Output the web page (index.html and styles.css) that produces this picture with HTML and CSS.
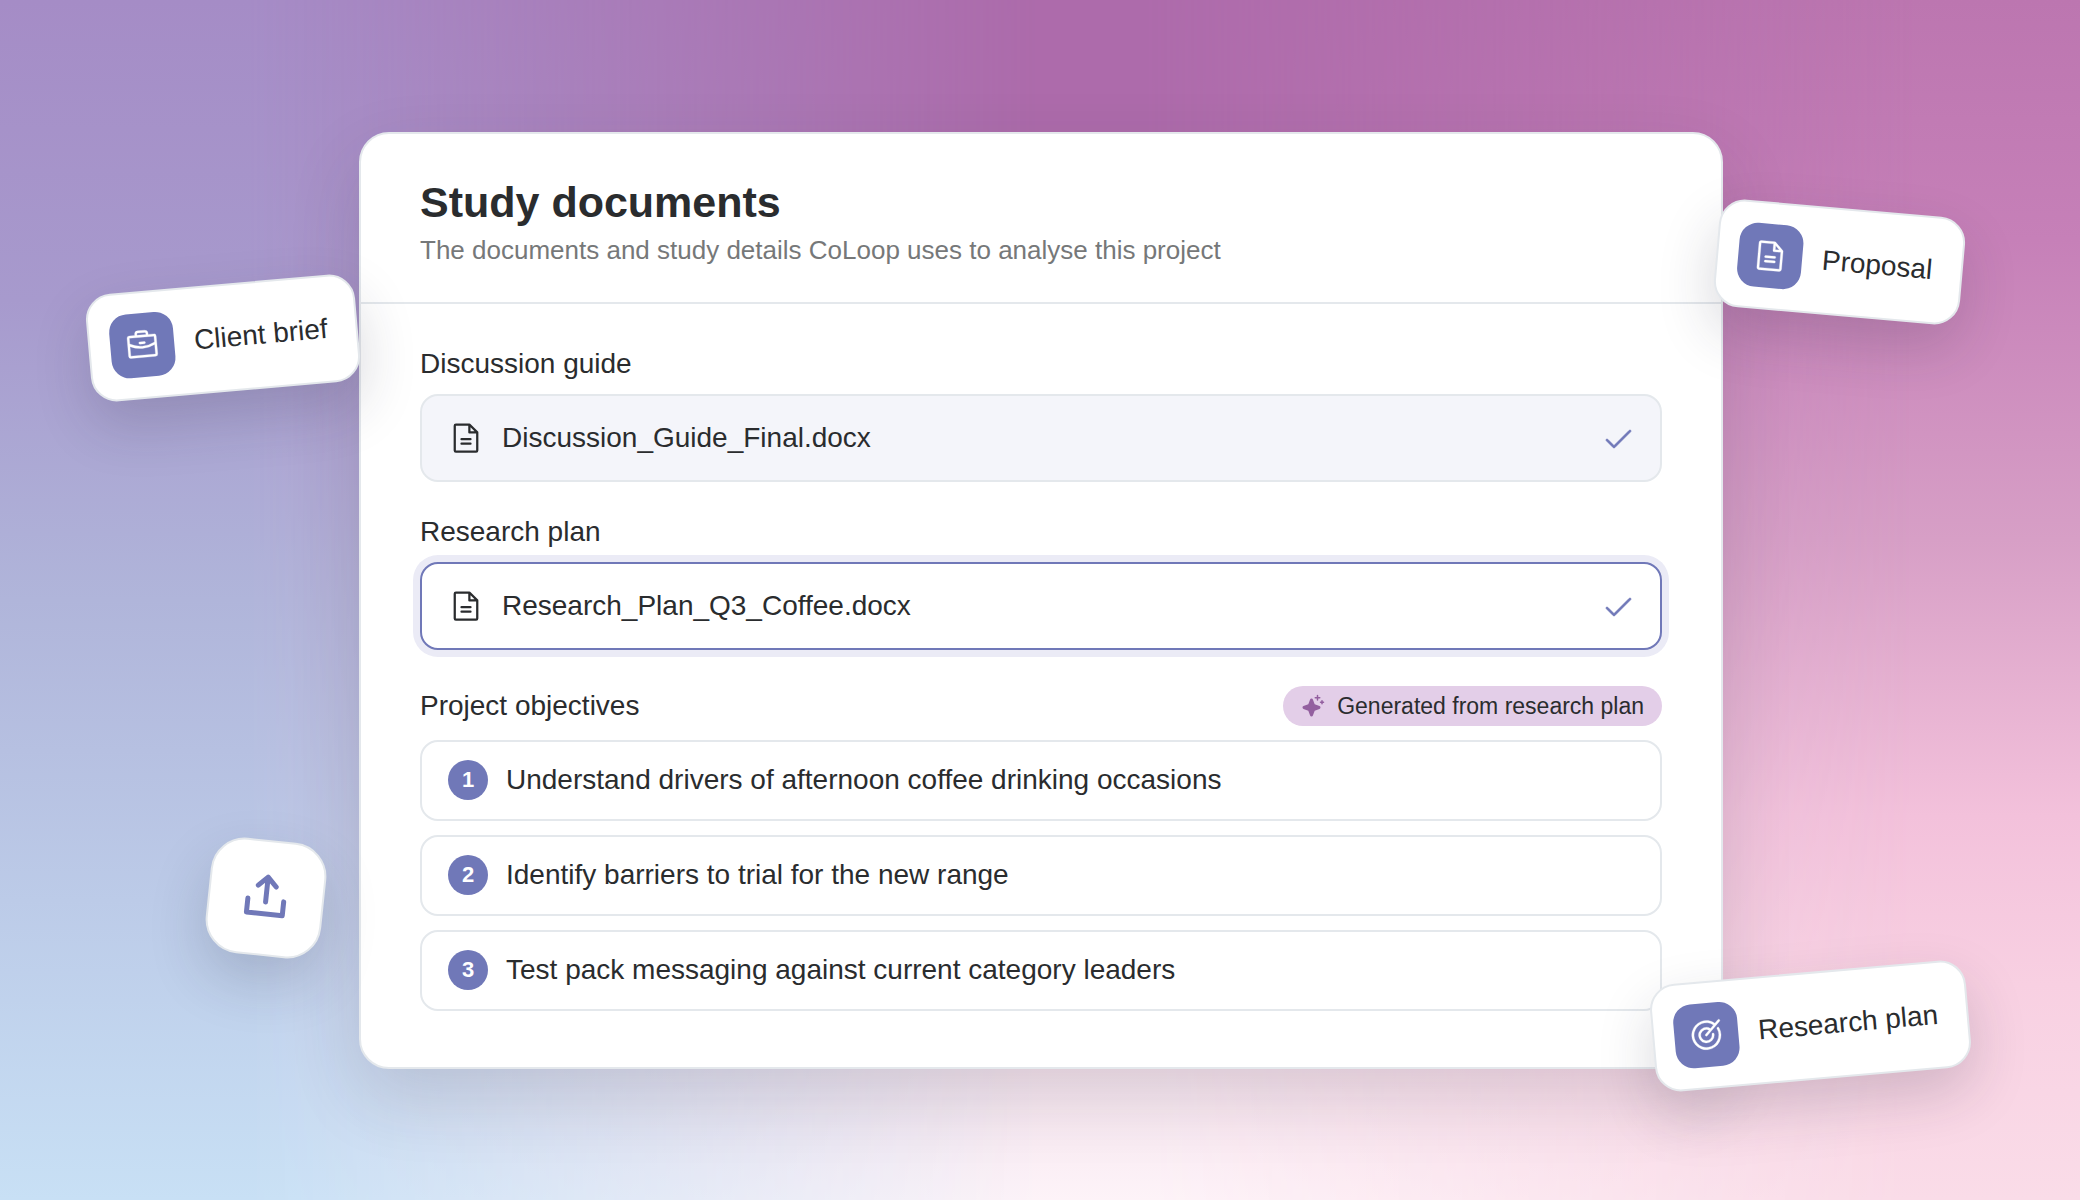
FILE: index.html
```html
<!DOCTYPE html>
<html lang="en">
<head>
    <meta charset="UTF-8">
    <meta name="viewport" content="width=device-width, initial-scale=1.0">
    <title>Study documents</title>
    <link rel="stylesheet" href="styles.css">
</head>
<body>
    <svg class="icon-defs" aria-hidden="true">
        <symbol id="file" viewBox="0 0 256 256">
            <path d="M213.66,82.34l-56-56A8,8,0,0,0,152,24H56A16,16,0,0,0,40,40V216a16,16,0,0,0,16,16H200a16,16,0,0,0,16-16V88A8,8,0,0,0,213.66,82.34ZM160,51.31,188.69,80H160ZM200,216H56V40h88V88a8,8,0,0,0,8,8h48V216Zm-32-80a8,8,0,0,1-8,8H96a8,8,0,0,1,0-16h64A8,8,0,0,1,168,136Zm0,32a8,8,0,0,1-8,8H96a8,8,0,0,1,0-16h64A8,8,0,0,1,168,168Z"/>
        </symbol>
        <symbol id="check" viewBox="0 0 256 256">
            <path d="M229.66,77.66l-128,128a8,8,0,0,1-11.32,0l-56-56a8,8,0,0,1,11.32-11.32L96,188.69,218.34,66.34a8,8,0,0,1,11.32,11.32Z"/>
        </symbol>
    </svg>

    <main class="stage">
        <section class="card">
            <header class="card-header">
                <h1>Study documents</h1>
                <p>The documents and study details CoLoop uses to analyse this project</p>
            </header>
            <div class="card-body">
                <div class="field">
                    <h2>Discussion guide</h2>
                    <div class="file">
                        <svg class="file-icon"><use href="#file"/></svg>
                        <span>Discussion_Guide_Final.docx</span>
                        <svg class="check-icon"><use href="#check"/></svg>
                    </div>
                </div>
                <div class="field">
                    <h2>Research plan</h2>
                    <div class="file active">
                        <svg class="file-icon"><use href="#file"/></svg>
                        <span>Research_Plan_Q3_Coffee.docx</span>
                        <svg class="check-icon"><use href="#check"/></svg>
                    </div>
                </div>
                <div class="objectives">
                    <div class="objectives-head">
                        <h2>Project objectives</h2>
                        <span class="pill">
                            <svg class="pill-icon" viewBox="0 0 256 256">
                                <path d="M208,144a15.78,15.78,0,0,1-10.42,14.94L146,178l-19,51.62a15.92,15.92,0,0,1-29.88,0L78,178l-51.62-19a15.92,15.92,0,0,1,0-29.88L78,110l19-51.62a15.92,15.92,0,0,1,29.88,0L146,110l51.62,19A15.78,15.78,0,0,1,208,144ZM152,48h16V64a8,8,0,0,0,16,0V48h16a8,8,0,0,0,0-16H184V16a8,8,0,0,0-16,0V32H152a8,8,0,0,0,0,16Zm88,32h-8V72a8,8,0,0,0-16,0v8h-8a8,8,0,0,0,0,16h8v8a8,8,0,0,0,16,0V96h8a8,8,0,0,0,0-16Z"/>
                            </svg>
                            Generated from research plan
                        </span>
                    </div>
                    <ol>
                        <li><span class="number">1</span>Understand drivers of afternoon coffee drinking occasions</li>
                        <li><span class="number">2</span>Identify barriers to trial for the new range</li>
                        <li><span class="number">3</span>Test pack messaging against current category leaders</li>
                    </ol>
                </div>
            </div>
        </section>

        <!-- floating chips -->
        <div class="chip brief">
            <span class="chip-icon">
                <svg viewBox="0 0 256 256">
                    <path d="M216,56H176V48a24,24,0,0,0-24-24H104A24,24,0,0,0,80,48v8H40A16,16,0,0,0,24,72V200a16,16,0,0,0,16,16H216a16,16,0,0,0,16-16V72A16,16,0,0,0,216,56ZM96,48a8,8,0,0,1,8-8h48a8,8,0,0,1,8,8v8H96ZM216,72v41.61A184,184,0,0,1,128,136a184.07,184.07,0,0,1-88-22.38V72Zm0,128H40V131.64A200.19,200.19,0,0,0,128,152a200.25,200.25,0,0,0,88-20.37V200ZM104,112a8,8,0,0,1,8-8h32a8,8,0,0,1,0,16H112A8,8,0,0,1,104,112Z"/>
                </svg>
            </span>
            Client brief
        </div>
        <div class="chip proposal">
            <span class="chip-icon"><svg><use href="#file"/></svg></span>
            Proposal
        </div>
        <div class="chip plan">
            <span class="chip-icon">
                <svg viewBox="0 0 256 256">
                    <path d="M221.87,83.16A104.1,104.1,0,1,1,195.67,49l22.67-22.68a8,8,0,0,1,11.32,11.32l-96,96a8,8,0,0,1-11.32-11.32l27.72-27.72a40,40,0,1,0,17.87,31.09,8,8,0,1,1,16-.9,56,56,0,1,1-22.38-41.65L184.3,60.39a87.88,87.88,0,1,0,23.13,29.67,8,8,0,0,1,14.44-6.9Z"/>
                </svg>
            </span>
            Research plan
        </div>
        <button class="upload" type="button" aria-label="Upload">
            <svg viewBox="0 0 48 48">
                <path d="M24 28V4M15 12L24 3L33 12M6 26V40H42V26"/>
            </svg>
        </button>
    </main>
</body>
</html>
```
FILE: styles.css
```css
* {
    box-sizing: border-box;
}
body {
    margin: 0;
    font-family: "Liberation Sans", Arial, sans-serif;
    font-size: 28px;
    line-height: 36px;
    color: #2a2c2e;
}
h1, h2, p, ol {
    margin: 0;
    padding: 0;
}
.icon-defs {
    display: none;
}
svg {
    fill: currentColor;
}

/* page background: one vertical ramp per side, blended across */
.stage {
    position: relative;
    min-height: 100vh;
    padding-left: 2px;
    display: flex;
    align-items: center;
    justify-content: center;
    overflow: hidden;
    background: linear-gradient(#bc76b0 0%, #c680b8 20%, #d79fc6 45%, #f3c1db 68%, #f8d0e2 82%, #fadce8 100%);
}
.stage::before,
.stage::after {
    content: "";
    position: absolute;
    inset: 0;
}
.stage::before {
    background: linear-gradient(#ad6bab 0%, #ad6bab 12%, #d0a0c8 50%, #f0d8e6 80%, #fdf3f8 100%);
    mask-image: linear-gradient(90deg, #000 55%, transparent 92%);
}
.stage::after {
    background: linear-gradient(#a58cc6 0%, #a79acd 25%, #b0b5da 50%, #bccbe8 75%, #c8e0f5 100%);
    mask-image: linear-gradient(90deg, #000 12%, transparent 50%);
}

.card {
    position: relative;
    z-index: 1;
    width: 1364px;
    max-width: 90%;
    background-color: #fff;
    border: 2px solid #e4e8ec;
    border-radius: 30px;
    box-shadow: 0 28px 72px rgba(40, 40, 60, 0.14);
}
.card-header {
    padding: 42px 59px 34px;
    border-bottom: 2px solid #e4e8ec;
}
h1 {
    font-size: 43px;
    line-height: 52px;
    margin-bottom: 4px;
}
.card-header p {
    font-size: 26px;
    color: #767879;
}
.card-body {
    padding: 42px 59px 56px;
}
h2 {
    font-size: 28px;
    font-weight: normal;
}
.field {
    margin-bottom: 32px;
}
.field h2 {
    margin-bottom: 12px;
}
.file {
    display: flex;
    align-items: center;
    gap: 18px;
    height: 88px;
    padding: 0 26px;
    background-color: #f4f5fa;
    border: 2px solid #e4e8ec;
    border-radius: 18px;
}
.file.active {
    background-color: #fff;
    border-color: #7078b8;
    box-shadow: 0 0 0 7px #ebebf6;
}
.file-icon {
    width: 36px;
    height: 36px;
}
.check-icon {
    width: 32px;
    height: 32px;
    margin-left: auto;
    color: #7078b8;
    stroke: currentColor;
    stroke-width: 6;
}
.objectives {
    padding-top: 4px;
}
.objectives-head {
    display: flex;
    align-items: center;
    justify-content: space-between;
    margin-bottom: 14px;
}
.pill {
    display: flex;
    align-items: center;
    gap: 12px;
    height: 40px;
    padding: 0 18px;
    border-radius: 20px;
    background-color: #e3cee8;
    font-size: 23px;
}
.pill-icon {
    width: 24px;
    height: 24px;
    color: #935f9f;
}
ol {
    display: flex;
    flex-direction: column;
    gap: 14px;
    list-style: none;
}
li {
    display: flex;
    align-items: center;
    gap: 18px;
    height: 81px;
    padding: 0 26px;
    border: 2px solid #e4e8ec;
    border-radius: 18px;
}
.number {
    display: flex;
    align-items: center;
    justify-content: center;
    width: 40px;
    height: 40px;
    border-radius: 50%;
    background-color: #7078b8;
    color: #fff;
    font-size: 22px;
    font-weight: bold;
}

.chip,
.upload {
    position: absolute;
    z-index: 2;
    background-color: #fff;
    border: 2px solid #e4e8ec;
    box-shadow: 0 24px 56px rgba(40, 40, 60, 0.18);
}
.chip {
    display: flex;
    align-items: center;
    gap: 20px;
    height: 108px;
    padding: 0 28px 0 20px;
    border-radius: 26px;
    white-space: nowrap;
}
.chip-icon {
    display: flex;
    align-items: center;
    justify-content: center;
    width: 64px;
    height: 64px;
    border-radius: 18px;
    background-color: #7078b8;
    color: #fff;
}
.chip-icon svg {
    width: 36px;
    height: 36px;
    stroke: currentColor;
    stroke-width: 2;
}
.brief {
    left: 88px;
    top: 284px;
    transform: rotate(-5deg);
}
.proposal {
    left: 1716px;
    top: 208px;
    transform: rotate(5deg);
}
.plan {
    left: 1652px;
    top: 972px;
    transform: rotate(-5deg);
}
.upload {
    left: 208px;
    top: 840px;
    width: 116px;
    height: 116px;
    padding: 0;
    display: flex;
    align-items: center;
    justify-content: center;
    border-radius: 34px;
    color: #7078b8;
    transform: rotate(6deg);
}
.upload svg {
    width: 48px;
    height: 48px;
    fill: none;
    stroke: currentColor;
    stroke-width: 5;
    stroke-linecap: round;
    stroke-linejoin: round;
}
```
